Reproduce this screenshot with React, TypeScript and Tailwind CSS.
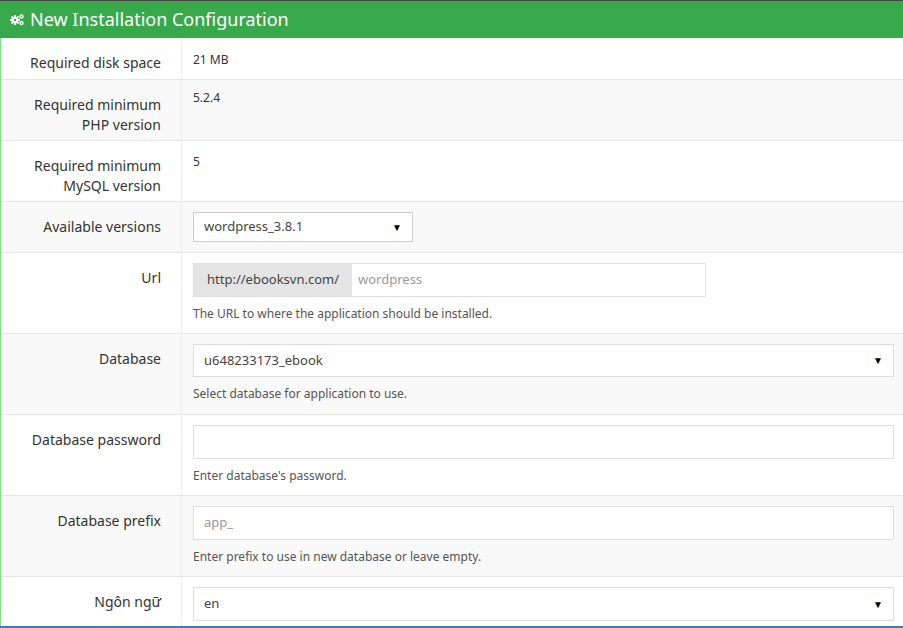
import React from "react";

const Row = ({ label, children, gray, h, center }: { label: React.ReactNode; children: React.ReactNode; gray?: boolean; h: string; center?: boolean }) => (
  <div className={`flex border-b border-[#e6e6e6] ${gray ? "bg-[#f9f9f9]" : "bg-white"} ${h}`}>
    <div className={`w-[181px] shrink-0 border-r border-[#ececec] pr-[20px] text-right text-[14px] leading-[20px] text-[#333] ${center ? "flex items-center justify-end" : "pt-[15px]"}`}>{label}</div>
    <div className={`flex-1 pl-[11px] pr-[10px] ${center ? "flex items-center" : ""}`}>{children}</div>
  </div>
);

const Arrow = () => <span className="text-[10px] text-black">▼</span>;
const Help = ({ t }: { t: string }) => <div className="mt-[9px] text-[12px] leading-[16px] text-[#555]">{t}</div>;

export default function App() {
  return (
    <div className="w-[903px] h-[628px] overflow-hidden bg-white border-t border-[#444] border-b-2 border-b-[#3a7bc8] font-['Open_Sans','Liberation_Sans',sans-serif]">
      <div className="h-[37px] bg-[#37a94a] flex items-center pl-[10px] text-white text-[18px] gap-[5px]">
        <svg width="15" height="13" viewBox="0 0 15 13" fill="white">
          <circle cx="5" cy="7" r="3.3" />
          <circle cx="5" cy="7" r="1.2" fill="#37a94a" />
          <g stroke="white" strokeWidth="1.8">
            <line x1="5" y1="2" x2="5" y2="12" /><line x1="0" y1="7" x2="10" y2="7" />
            <line x1="1.5" y1="3.5" x2="8.5" y2="10.5" /><line x1="8.5" y1="3.5" x2="1.5" y2="10.5" />
          </g>
          <circle cx="5" cy="7" r="1.2" fill="#37a94a" />
          <circle cx="11.5" cy="3.5" r="2.2" /><circle cx="11.5" cy="3.5" r="0.8" fill="#37a94a" />
          <circle cx="11.5" cy="10" r="2.2" /><circle cx="11.5" cy="10" r="0.8" fill="#37a94a" />
        </svg>
        <span>New Installation Configuration</span>
      </div>
      <div className="border-l border-[#7fdc86]">
        <Row label="Required disk space" h="h-[42px]"><div className="pt-[13px] text-[12px] text-[#333]">21 MB</div></Row>
        <Row label={<>Required minimum<br />PHP version</>} gray h="h-[61px]"><div className="pt-[9px] text-[12px] text-[#333]">5.2.4</div></Row>
        <Row label={<>Required minimum<br />MySQL version</>} h="h-[61px]"><div className="pt-[12px] text-[12px] text-[#333]">5</div></Row>
        <Row label="Available versions" gray h="h-[51px]" center>
          <div className="w-[220px] h-[30px] border border-[#ccc] bg-white flex items-center justify-between px-[10px] text-[13px] text-[#444]">wordpress_3.8.1<Arrow /></div>
        </Row>
        <Row label="Url" h="h-[81px]">
          <div className="pt-[10px]">
            <div className="flex h-[34px] w-[513px] border border-[#e0e0e0]">
              <div className="bg-[#e4e4e4] flex items-center px-[13px] text-[13px] text-[#444]">http://ebooksvn.com/</div>
              <div className="flex items-center px-[6px] text-[13px] text-[#999]">wordpress</div>
            </div>
            <Help t="The URL to where the application should be installed." />
          </div>
        </Row>
        <Row label="Database" gray h="h-[81px]">
          <div className="pt-[10px]">
            <div className="h-[33px] w-[701px] border border-[#ddd] bg-white flex items-center justify-between px-[10px] text-[13px] text-[#444]">u648233173_ebook<Arrow /></div>
            <Help t="Select database for application to use." />
          </div>
        </Row>
        <Row label="Database password" h="h-[81px]">
          <div className="pt-[10px]">
            <div className="h-[34px] w-[701px] border border-[#ddd] bg-white" />
            <Help t="Enter database's password." />
          </div>
        </Row>
        <Row label="Database prefix" gray h="h-[81px]">
          <div className="pt-[10px]">
            <div className="h-[34px] w-[701px] border border-[#ddd] bg-white flex items-center px-[10px] text-[13px] text-[#999]">app_</div>
            <Help t="Enter prefix to use in new database or leave empty." />
          </div>
        </Row>
        <Row label="Ngôn ngữ" h="h-[60px]">
          <div className="pt-[10px]">
            <div className="h-[34px] w-[701px] border border-[#ddd] bg-white flex items-center justify-between px-[10px] text-[13px] text-[#444]">en<Arrow /></div>
          </div>
        </Row>
      </div>
    </div>
  );
}
